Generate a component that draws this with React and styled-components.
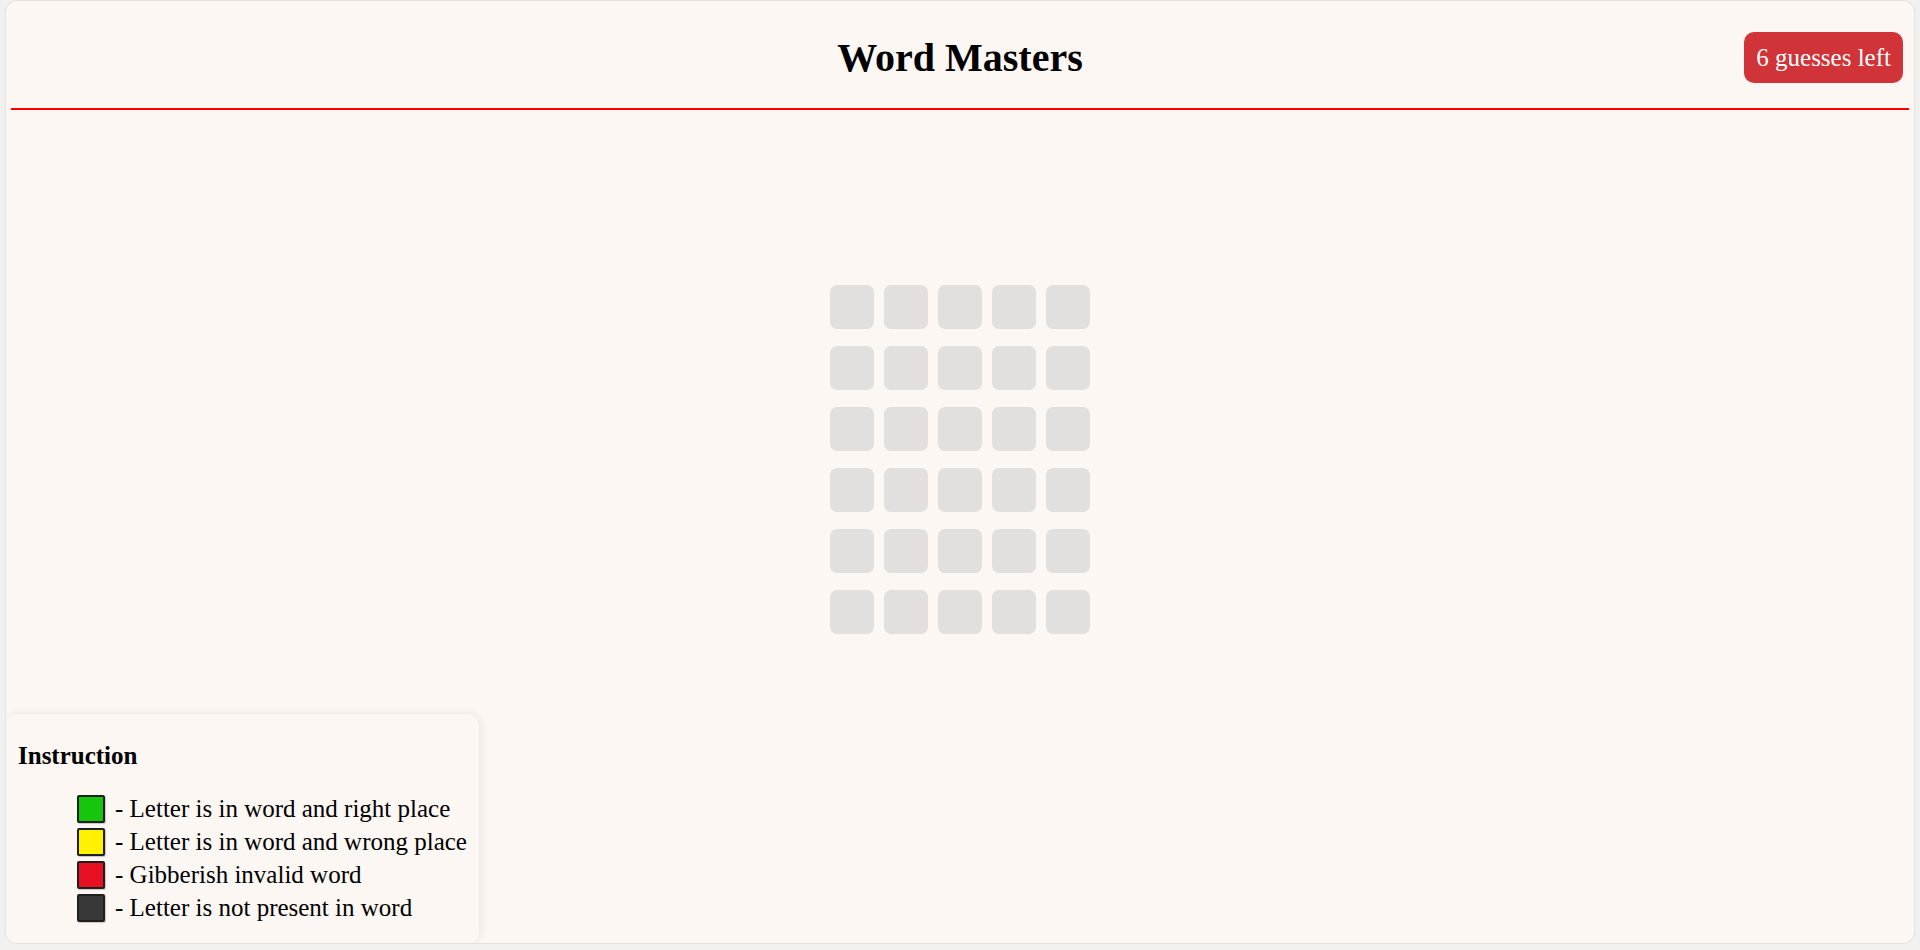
import React from "react";
import styled, { createGlobalStyle } from "styled-components";

const GlobalStyle = createGlobalStyle`
  body {
    margin: 0;
    background: #f1f0ef;
    font-family: "Liberation Serif", "Times New Roman", serif;
    color: #000;
  }
`;

const Shell = styled.div`
  position: relative;
  box-sizing: border-box;
  height: 944px;
  margin: 0 5px;
  padding: 0 5px;
  display: flex;
  flex-direction: column;
  background: #fcf7f3;
  border: 1px solid #e4e1de;
  border-radius: 12px;
  overflow: hidden;
`;

const Header = styled.header`
  box-sizing: border-box;
  height: 107px;
  padding-top: 5px;
  display: grid;
  grid-template-columns: 1fr auto 1fr;
  align-items: center;
`;

const Title = styled.h1`
  grid-column: 2;
  margin: 0;
  font-size: 40px;
  font-weight: bold;
`;

const Badge = styled.div`
  justify-self: end;
  margin-right: 6px;
  padding: 11px 12px;
  background: #d13438;
  color: #fff;
  font-size: 25px;
  line-height: 29px;
  border-radius: 10px;
`;

const Divider = styled.hr`
  margin: 0;
  border: none;
  height: 2px;
  background: #ff0000;
`;

const BoardArea = styled.main`
  flex: 1;
  display: flex;
  justify-content: center;
  padding-top: 175px;
`;

const Board = styled.div`
  display: grid;
  grid-template-columns: repeat(5, 44px);
  grid-auto-rows: 44px;
  column-gap: 10px;
  row-gap: 17px;
  align-content: start;
`;

const Tile = styled.div`
  background: #e3dfdc;
  border-radius: 7px;
`;

const Instructions = styled.aside`
  position: absolute;
  left: -1px;
  bottom: -1px;
  box-sizing: border-box;
  width: 474px;
  height: 230px;
  padding: 28px 13px;
  background: #fcf7f3;
  border-radius: 12px;
  box-shadow: 2px -1px 8px rgba(0, 0, 0, 0.07);
`;

const InstructionTitle = styled.h3`
  margin: 0 0 22px;
  font-size: 25px;
  line-height: 28px;
  font-weight: bold;
`;

const Legend = styled.ul`
  list-style: none;
  margin: 0;
  padding-left: 59px;
`;

const LegendItem = styled.li`
  display: flex;
  align-items: center;
  height: 33px;
  font-size: 25px;
  white-space: nowrap;
`;

const Swatch = styled.span`
  flex-shrink: 0;
  box-sizing: border-box;
  width: 28px;
  height: 28px;
  margin-right: 10px;
  background: ${(p) => p.color};
  border: 2px solid #1f1f1f;
  border-radius: 2px;
  box-shadow: 1px 1px 1px rgba(0, 0, 0, 0.2);
`;

const legend = [
  { color: "#16c60c", text: "- Letter is in word and right place" },
  { color: "#fff100", text: "- Letter is in word and wrong place" },
  { color: "#e81123", text: "- Gibberish invalid word" },
  { color: "#383838", text: "- Letter is not present in word" },
];

const App = () => {
  const tiles = Array.from({ length: 30 });

  return (
    <>
      <GlobalStyle />
      <Shell>
        <Header>
          <Title>Word Masters</Title>
          <Badge>6 guesses left</Badge>
        </Header>
        <Divider />

        <BoardArea>
          <Board>
            {tiles.map((_, i) => (
              <Tile key={i} />
            ))}
          </Board>
        </BoardArea>

        <Instructions>
          <InstructionTitle>Instruction</InstructionTitle>
          <Legend>
            {legend.map((item) => (
              <LegendItem key={item.color}>
                <Swatch color={item.color} />
                {item.text}
              </LegendItem>
            ))}
          </Legend>
        </Instructions>
      </Shell>
    </>
  );
};

export default App;
